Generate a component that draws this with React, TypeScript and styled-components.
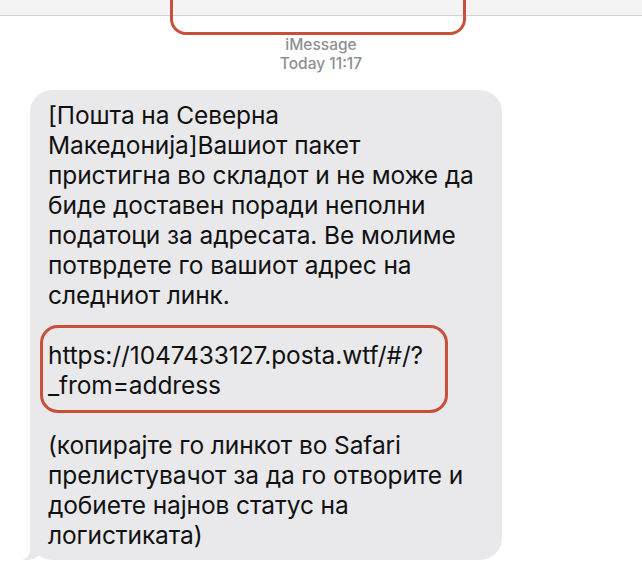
import * as React from "react";
import styled, { createGlobalStyle } from "styled-components";

const GlobalStyle = createGlobalStyle`
  html, body {
    margin: 0;
    padding: 0;
    background: #ffffff;
  }
  body {
    font-family: Inter, "Noto Sans", "Liberation Sans", sans-serif;
    -webkit-font-smoothing: antialiased;
  }
`;

const Screen = styled.div`
  position: relative;
  width: 642px;
  height: 570px;
  overflow: hidden;
  background: #ffffff;
`;

const TopBar = styled.div`
  height: 15px;
  background: #f4f4f4;
  border-bottom: 1px solid #d4d4d6;
`;

const Highlight = styled.div<{ radius: number }>`
  position: absolute;
  border: 3px solid #c94f3b;
  border-radius: ${p => p.radius}px;
  box-sizing: border-box;
  pointer-events: none;
`;

const TopHighlight = styled(Highlight)`
  left: 170px;
  top: -30px;
  width: 296px;
  height: 65px;
`;

const Stamp = styled.div`
  display: flex;
  flex-direction: column;
  align-items: center;
  padding-top: 19px;
  font-size: 15.5px;
  line-height: 19px;
  color: #8e8e93;
  font-weight: 500;
`;

const Thread = styled.div`
  padding: 17px 0 0 30px;
`;

const Bubble = styled.div`
  position: relative;
  width: 472px;
  box-sizing: border-box;
  padding: 10px 18px 10px 18px;
  background: #e9e9eb;
  border-radius: 22px;
  color: #111111;
  font-size: 24.5px;
  line-height: 30px;
  letter-spacing: -0.1px;

  &::before {
    content: "";
    position: absolute;
    left: -7px;
    bottom: 0;
    width: 20px;
    height: 22px;
    background: #e9e9eb;
    border-bottom-right-radius: 16px 14px;
  }

  &::after {
    content: "";
    position: absolute;
    left: -26px;
    bottom: 0;
    width: 26px;
    height: 22px;
    background: #ffffff;
    border-bottom-right-radius: 10px;
  }
`;

const Paragraph = styled.p`
  margin: 0;
`;

const LinkBlock = styled.div`
  position: relative;
  margin: 30px 0;
`;

const LinkHighlight = styled(Highlight)`
  left: -8px;
  top: -15px;
  width: 408px;
  height: 88px;
`;

export default function App() {
  return (
    <Screen>
      <GlobalStyle />
      <TopBar />
      <TopHighlight radius={16} />
      <Stamp>
        <span>iMessage</span>
        <span>Today 11:17</span>
      </Stamp>
      <Thread>
        <Bubble>
          <Paragraph>
            [Пошта на Северна
            <br />
            Македонија]Вашиот пакет
            <br />
            пристигна во складот и не може да
            <br />
            биде доставен поради неполни
            <br />
            податоци за адресата. Ве молиме
            <br />
            потврдете го вашиот адрес на
            <br />
            следниот линк.
          </Paragraph>
          <LinkBlock>
            <Paragraph>
              https://1047433127.posta.wtf/#/?
              <br />
              _from=address
            </Paragraph>
            <LinkHighlight radius={18} />
          </LinkBlock>
          <Paragraph>
            (копирајте го линкот во Safari
            <br />
            прелистувачот за да го отворите и
            <br />
            добиете најнов статус на
            <br />
            логистиката)
          </Paragraph>
        </Bubble>
      </Thread>
    </Screen>
  );
}
